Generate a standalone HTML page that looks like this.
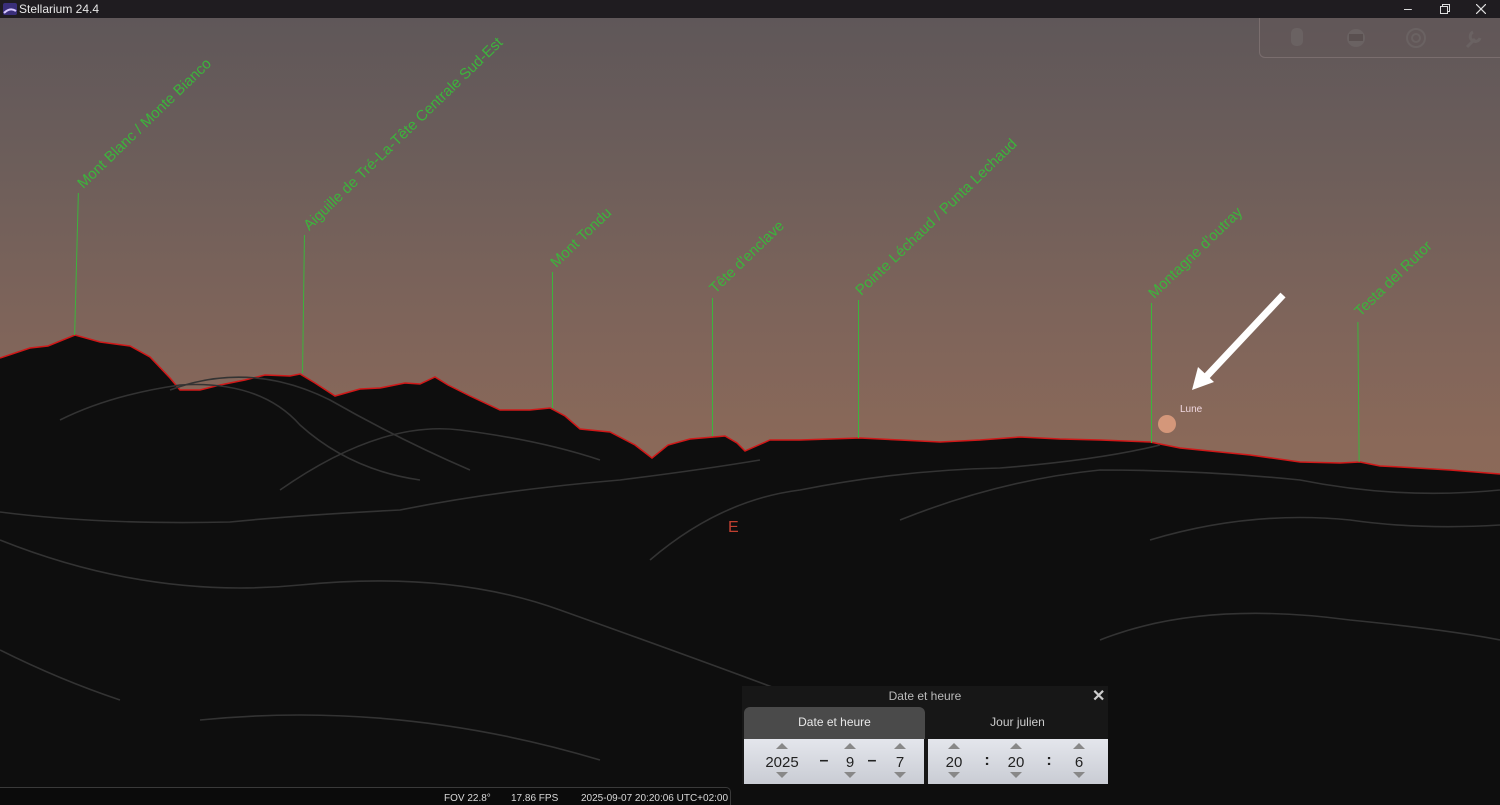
<!DOCTYPE html>
<html><head><meta charset="utf-8"><style>
*{margin:0;padding:0;box-sizing:border-box}
body{width:1500px;height:805px;overflow:hidden;background:#0e0e0e;font-family:"Liberation Sans",sans-serif;position:relative}
#title{position:absolute;left:0;top:0;width:1500px;height:18px;background:#1f1c20;color:#e8e8e8;font-size:12px}
#title span{position:absolute;left:19px;top:2px}
#sky{position:absolute;left:0;top:18px;width:1500px;height:500px;background:linear-gradient(#5f5759 0%,#6d5e5a 30%,#7e645a 60%,#8a6959 85%,#8d6a58 100%)}
.lab{position:absolute;color:#3cb43c;font-size:15px;white-space:nowrap;transform-origin:0 100%;transform:rotate(-44deg)}
.vl{position:absolute;width:1px;background:#3cb43c}
#tb{position:absolute;left:1259px;top:18px;width:245px;height:40px;border:1px solid #7a6e6e;border-top:none;border-radius:0 0 0 6px;background:rgba(100,88,88,.4)}
#status{position:absolute;left:0;top:787px;width:731px;height:18px;background:#0b0b0b;border:1px solid #3a3a3a;border-bottom:none;border-left:none;border-radius:0 5px 0 0;color:#d8d8d8;font-size:10px}
#status span{position:absolute;top:5px}
#dlg{position:absolute;left:742px;top:686px;width:366px;height:98px;background:#171717;color:#ddd}
.spin{position:absolute;top:53px;height:45px;background:linear-gradient(#e4e6ec,#c9ccd4);color:#222;font-size:15px}
.spin div{position:absolute;text-align:center}
.up{width:0;height:0;border-left:6px solid transparent;border-right:6px solid transparent;border-bottom:6px solid #888;position:absolute}
.dn{width:0;height:0;border-left:6px solid transparent;border-right:6px solid transparent;border-top:6px solid #888;position:absolute}
.sep{font-weight:bold;font-size:16px}
</style></head><body>
<div id="title"><svg width="14" height="12" style="position:absolute;left:3px;top:3px"><rect width="14" height="12" rx="2" fill="#3a2f7a"/><path d="M1 10 Q7 4 13 8" stroke="#d8c8ff" stroke-width="2" fill="none"/></svg><span>Stellarium 24.4</span>
<span style="left:1404px;top:0;font-size:14px">–</span>
<svg width="10" height="10" style="position:absolute;left:1440px;top:4px"><rect x="0.5" y="2.5" width="7" height="7" fill="none" stroke="#ddd"/><path d="M2.5 2.5V0.5H9.5V7.5H7.5" fill="none" stroke="#ddd"/></svg>
<svg width="10" height="10" style="position:absolute;left:1476px;top:4px"><path d="M0 0L10 10M10 0L0 10" stroke="#ddd" stroke-width="1.2"/></svg>
</div>
<div id="sky"></div>
<svg width="1500" height="805" style="position:absolute;left:0;top:0">
<defs><path id="hz" d="M0 358 L30 348 L48 346 L75 335 L100 342 L130 346 L150 357 L170 378 L180 390 L200 390 L220 385 L245 380 L265 375 L290 376 L300 374 L315 383 L335 396 L360 389 L380 388 L405 383 L420 384 L435 377 L448 385 L470 396 L500 410 L530 410 L550 408 L565 416 L580 429 L610 432 L635 445 L652 458 L668 445 L690 439 L725 436 L737 443 L745 451 L770 440 L800 440 L860 438 L900 440 L940 442 L980 440 L1020 437 L1060 439 L1100 440 L1150 442 L1180 448 L1220 452 L1250 455 L1300 462 L1340 463 L1360 462 L1380 466 L1400 467 L1450 470 L1500 474"/></defs>
<path d="M0 358 L30 348 L48 346 L75 335 L100 342 L130 346 L150 357 L170 378 L180 390 L200 390 L220 385 L245 380 L265 375 L290 376 L300 374 L315 383 L335 396 L360 389 L380 388 L405 383 L420 384 L435 377 L448 385 L470 396 L500 410 L530 410 L550 408 L565 416 L580 429 L610 432 L635 445 L652 458 L668 445 L690 439 L725 436 L737 443 L745 451 L770 440 L800 440 L860 438 L900 440 L940 442 L980 440 L1020 437 L1060 439 L1100 440 L1150 442 L1180 448 L1220 452 L1250 455 L1300 462 L1340 463 L1360 462 L1380 466 L1400 467 L1450 470 L1500 474 L1500 787 L0 787 Z" fill="#0e0e0e"/>
<use href="#hz" fill="none" stroke="#d01818" stroke-width="1.5"/>
<g fill="none" stroke="#333" stroke-width="1.6">
<path d="M0 512 Q100 525 230 522 Q300 515 400 510 Q500 490 620 480 Q700 470 760 460"/>
<path d="M0 540 Q150 600 300 585 Q450 570 560 610 Q700 660 780 690"/>
<path d="M60 420 Q110 395 180 385 Q260 380 300 425 Q350 470 420 480"/>
<path d="M170 390 Q250 360 330 400 Q400 440 470 470"/>
<path d="M280 490 Q380 420 460 430 Q540 440 600 460"/>
<path d="M650 560 Q720 500 800 490 Q900 470 1000 468 Q1100 460 1160 445"/>
<path d="M0 650 Q60 680 120 700"/>
<path d="M900 520 Q1000 480 1100 470 Q1200 470 1300 480 Q1400 500 1500 490"/>
<path d="M1150 540 Q1250 510 1350 520 Q1420 530 1500 525"/>
<path d="M1100 640 Q1200 600 1350 620 Q1450 630 1500 640"/>
<path d="M200 720 Q400 700 600 760"/>
</g>
<path d="M1283 295 L1205 378" stroke="#fff" stroke-width="7"/>
<path d="M1192 390 L1198 367 L1214 382 Z" fill="#fff"/>
<circle cx="1167" cy="424" r="9" fill="#d4977a"/>
<text x="1180" y="412" font-size="10" fill="#f0d8e0" font-family="Liberation Sans">Lune</text>
<text x="728" y="532" font-size="16" fill="#c04030" font-family="Liberation Sans">E</text>
</svg>
<div class="vl" style="left:76px;top:193px;height:142px;transform:rotate(1.5deg)"></div>
<div class="vl" style="left:303px;top:235px;height:138px;transform:rotate(0.8deg)"></div>
<div class="vl" style="left:552px;top:272px;height:136px"></div>
<div class="vl" style="left:712px;top:298px;height:138px"></div>
<div class="vl" style="left:858px;top:300px;height:138px"></div>
<div class="vl" style="left:1151px;top:303px;height:140px;background:#3cb43c"></div>
<div class="vl" style="left:1358px;top:322px;height:140px;transform:rotate(-0.5deg)"></div>
<div class="lab" style="left:86px;top:175px">Mont Blanc / Monte Bianco</div>
<div class="lab" style="left:312px;top:217px">Aiguille de Tré-La-Tête Centrale Sud-Est</div>
<div class="lab" style="left:559px;top:254px">Mont Tondu</div>
<div class="lab" style="left:718px;top:280px">Tête d'enclave</div>
<div class="lab" style="left:864px;top:282px">Pointe Léchaud / Punta Lechaud</div>
<div class="lab" style="left:1157px;top:285px">Montagne d'outray</div>
<div class="lab" style="left:1363px;top:303px">Testa del Rutor</div>
<div id="tb">
<svg width="245" height="40"><g fill="#6a6262">
<rect x="31" y="10" width="12" height="18" rx="5"/>
<circle cx="96" cy="20" r="9"/>
<circle cx="156" cy="20" r="9" fill="none" stroke="#6a6262" stroke-width="2"/><circle cx="156" cy="20" r="4" fill="none" stroke="#6a6262" stroke-width="2"/>
<path d="M207 29 L215 21 M213 14 a5 5 0 1 0 7 6" stroke="#6a6262" stroke-width="3" fill="none"/>
</g><rect x="89" y="16" width="14" height="7" fill="#5a5050"/></svg>
</div>
<div id="status"><span style="left:444px">FOV 22.8°</span><span style="left:511px">17.86 FPS</span><span style="left:581px">2025-09-07 20:20:06 UTC+02:00</span></div>
<div id="dlg">
<div style="position:absolute;left:0;top:3px;width:366px;text-align:center;font-size:12px;color:#bbb">Date et heure</div>
<div style="position:absolute;left:350px;top:0px;font-size:16px;color:#ccc;font-weight:bold">✕</div>
<div style="position:absolute;left:2px;top:21px;width:181px;height:32px;background:#4a4a4a;border-radius:6px 6px 0 0;text-align:center;font-size:12px;line-height:30px;color:#e8e8e8">Date et heure</div>
<div style="position:absolute;left:185px;top:21px;width:181px;height:32px;text-align:center;font-size:12px;line-height:30px;color:#ccc">Jour julien</div>
<div class="spin" style="left:2px;width:180px">
<div class="up" style="left:32px;top:4px"></div><div style="left:16px;top:15px;width:44px">2025</div><div class="dn" style="left:32px;top:33px"></div>
<div class="sep" style="left:74px;top:13px;width:12px">–</div>
<div class="up" style="left:100px;top:4px"></div><div style="left:96px;top:15px;width:20px">9</div><div class="dn" style="left:100px;top:33px"></div>
<div class="sep" style="left:122px;top:13px;width:12px">–</div>
<div class="up" style="left:150px;top:4px"></div><div style="left:146px;top:15px;width:20px">7</div><div class="dn" style="left:150px;top:33px"></div>
</div>
<div class="spin" style="left:186px;width:180px">
<div class="up" style="left:20px;top:4px"></div><div style="left:12px;top:15px;width:28px">20</div><div class="dn" style="left:20px;top:33px"></div>
<div class="sep" style="left:54px;top:13px;width:10px">:</div>
<div class="up" style="left:82px;top:4px"></div><div style="left:74px;top:15px;width:28px">20</div><div class="dn" style="left:82px;top:33px"></div>
<div class="sep" style="left:116px;top:13px;width:10px">:</div>
<div class="up" style="left:145px;top:4px"></div><div style="left:141px;top:15px;width:20px">6</div><div class="dn" style="left:145px;top:33px"></div>
</div>
</div>
</body></html>
